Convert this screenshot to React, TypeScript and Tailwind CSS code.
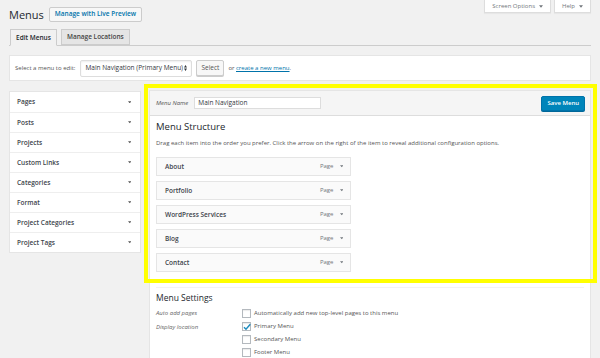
import React from "react";

const Caret: React.FC<{ className?: string }> = ({ className }) => (
  <svg viewBox="0 0 8 5" className={className} fill="currentColor">
    <path d="M0 0h8L4 5z" />
  </svg>
);

const leftItems = [
  "Pages",
  "Posts",
  "Projects",
  "Custom Links",
  "Categories",
  "Format",
  "Project Categories",
  "Project Tags",
];

const menuItems = ["About", "Portfolio", "WordPress Services", "Blog", "Contact"];

const Checkbox: React.FC<{ checked?: boolean }> = ({ checked }) => (
  <span className="relative w-[9px] h-[9px] shrink-0 border border-[#b4b9be] bg-white shadow-[inset_0_1px_1px_rgba(0,0,0,0.08)]">
    {checked && (
      <svg viewBox="0 0 10 10" className="absolute -left-[1px] -top-[1px] w-[10px] h-[10px]">
        <path d="M2 5.2l2 2.1L8.3 2.2" stroke="#1e8cbe" strokeWidth="1.4" fill="none" />
      </svg>
    )}
  </span>
);

export default function App() {
  return (
    <div
      className="relative w-[600px] h-[358px] overflow-hidden bg-[#f1f1f1] text-[#23282d]"
      style={{ fontFamily: '"Open Sans", "Liberation Sans", sans-serif' }}
    >
      {/* top row */}
      <div className="flex justify-between items-start">
        <div className="flex items-center gap-[5px] pl-[9px] pt-[7px]">
          <h1 className="text-[11px] leading-[15px] text-[#23282d]">Menus</h1>
          <button className="h-[15px] px-[5px] border border-[#ccc] bg-[#f7f7f7] rounded-[2px] text-[6.5px] font-semibold text-[#0073aa] leading-none">
            Manage with Live Preview
          </button>
        </div>
        <div className="flex gap-[3px] pr-[9px]">
          <div className="flex items-center gap-[4px] h-[13px] px-[7px] bg-white border border-t-0 border-[#ddd] shadow-[0_1px_1px_rgba(0,0,0,0.04)] text-[6px] text-[#72777c]">
            Screen Options
            <Caret className="w-[4px] h-[3px]" />
          </div>
          <div className="flex items-center gap-[4px] h-[13px] px-[7px] bg-white border border-t-0 border-[#ddd] shadow-[0_1px_1px_rgba(0,0,0,0.04)] text-[6px] text-[#72777c]">
            Help
            <Caret className="w-[4px] h-[3px]" />
          </div>
        </div>
      </div>

      {/* tabs */}
      <div className="flex items-end gap-[4px] mt-[7px] mx-[9px] pl-[1px] h-[17px] border-b border-[#ccc]">
        <div className="h-[17px] -mb-px px-[5px] flex items-center border border-[#ccc] border-b-[#f1f1f1] bg-[#f1f1f1] text-[6.5px] font-semibold">
          Edit Menus
        </div>
        <div className="h-[16px] px-[5px] flex items-center border border-[#ccc] bg-[#e5e5e5] text-[6.5px] font-semibold text-[#444]">
          Manage Locations
        </div>
      </div>

      {/* select bar */}
      <div className="mx-[9px] mt-[9px] h-[26px] flex items-center gap-[4px] px-[5px] bg-white border border-[#e5e5e5] text-[6px] text-[#555]">
        <span>Select a menu to edit:</span>
        <div className="ml-[1px] h-[17px] w-[112px] flex items-center justify-between px-[4px] border border-[#ddd] rounded-[2px] bg-white text-[6.5px] text-[#32373c] shadow-[inset_0_1px_2px_rgba(0,0,0,0.07)]">
          <span>Main Navigation (Primary Menu)</span>
          <svg viewBox="0 0 4 8" className="w-[3px] h-[6px]" fill="#32373c">
            <path d="M0 3.3L2 0l2 3.3zM0 4.7h4L2 8z" />
          </svg>
        </div>
        <button className="h-[16px] px-[4px] border border-[#ccc] rounded-[2px] bg-[#f7f7f7] text-[6.5px] text-[#555] shadow-[0_1px_0_#ccc]">
          Select
        </button>
        <span>
          or <span className="text-[#0073aa] underline">create a new menu</span>.
        </span>
      </div>

      {/* columns */}
      <div className="flex gap-[8px] mx-[9px] mt-[9px]">
        <div className="w-[132px] self-start mt-[1px] bg-white border border-[#e5e5e5]">
          {leftItems.map((item, i) => (
            <div
              key={item}
              className={`h-[20px] flex items-center justify-between pl-[7px] pr-[9px] text-[6.5px] font-semibold text-[#3c434a] ${
                i > 0 ? "border-t border-[#eee]" : ""
              }`}
            >
              {item}
              <Caret className="w-[3.5px] h-[2.5px] text-[#555]" />
            </div>
          ))}
        </div>

        <div className="w-[442px] h-[300px] bg-white border border-[#e5e5e5]">
          <div className="h-[25px] flex items-center justify-between pl-[6px] pr-[5px] bg-[#f5f5f5] border-b border-[#ddd]">
            <div className="flex items-center gap-[6px]">
              <span className="text-[6px] italic text-[#555]">Menu Name</span>
              <div className="w-[127px] h-[12px] flex items-center px-[3px] bg-white border border-[#ddd] text-[6.5px] text-[#32373c]">
                Main Navigation
              </div>
            </div>
            <button className="h-[15px] px-[5px] rounded-[2px] bg-[#0085ba] border border-[#0073aa] text-white text-[6px] font-semibold shadow-[0_1px_0_#006799]">
              Save Menu
            </button>
          </div>

          <div className="px-[6px]">
            <h2 className="mt-[5px] text-[9.5px] leading-[12px]">Menu Structure</h2>
            <p className="mt-[6px] text-[6px] text-[#555] leading-[8px]">
              Drag each item into the order you prefer. Click the arrow on the right of the item to reveal additional configuration options.
            </p>
            <div className="mt-[10px] flex flex-col gap-[5px] w-[195px]">
              {menuItems.map((item) => (
                <div
                  key={item}
                  className="h-[19px] flex items-center justify-between pl-[8px] pr-[7px] bg-[#fafafa] border border-[#e5e5e5] text-[6.5px] font-semibold text-[#3c434a]"
                >
                  {item}
                  <span className="flex items-center gap-[6px] font-normal text-[#72777c] text-[6px]">
                    Page
                    <Caret className="w-[3.5px] h-[2.5px] text-[#72777c]" />
                  </span>
                </div>
              ))}
            </div>

            <div className="mt-[15px] border-t border-[#f3f3f3] pt-[4px]">
              <h3 className="text-[8.5px] leading-[12px]">Menu Settings</h3>
              <div className="mt-[5px] flex text-[6px] text-[#555]">
                <div className="w-[86px] italic text-[#666]">Auto add pages</div>
                <div className="flex items-center gap-[3px]">
                  <Checkbox />
                  <span>Automatically add new top-level pages to this menu</span>
                </div>
              </div>
              <div className="mt-[4px] flex text-[6px] text-[#555]">
                <div className="w-[86px] italic text-[#666] pt-[1px]">Display location</div>
                <div className="flex flex-col gap-[4px]">
                  <div className="flex items-center gap-[3px]">
                    <Checkbox checked />
                    <span>Primary Menu</span>
                  </div>
                  <div className="flex items-center gap-[3px]">
                    <Checkbox />
                    <span>Secondary Menu</span>
                  </div>
                  <div className="flex items-center gap-[3px]">
                    <Checkbox />
                    <span>Footer Menu</span>
                  </div>
                </div>
              </div>
            </div>
          </div>
        </div>
      </div>

      {/* highlight overlay */}
      <div className="absolute left-[144px] top-[84px] w-[453px] h-[199px] border-4 border-[#ffff00] pointer-events-none" />
    </div>
  );
}
